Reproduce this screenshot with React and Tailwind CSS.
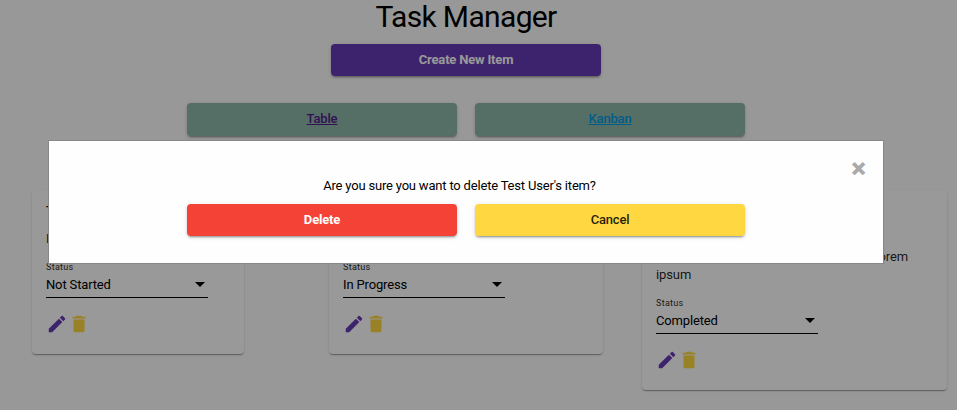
import React from "react";

const raised =
  "shadow-[0_3px_1px_-2px_rgba(0,0,0,.2),0_2px_2px_0_rgba(0,0,0,.14),0_1px_5px_0_rgba(0,0,0,.12)]";

function Button({ className, children }) {
  return (
    <button className={`flex w-[270px] items-center justify-center rounded text-[13px] tracking-[-0.18px] ${raised} ${className}`}>
      {children}
    </button>
  );
}

function Card({ className, title, status, children }) {
  return (
    <section
      className={`shrink-0 rounded bg-white px-[14px] pt-3 shadow-[0_2px_1px_-1px_rgba(0,0,0,.2),0_1px_1px_0_rgba(0,0,0,.14),0_1px_3px_0_rgba(0,0,0,.12)] ${className}`}
    >
      <h2 className="h-[18px] text-[13px] font-medium leading-[18px]">{title}</h2>
      <div className="mt-[10px] text-[13px] leading-[18px] tracking-[-0.1px] text-black/87">{children}</div>
      <div className="mt-[14px] w-[162px] border-b border-black">
        <div className="h-[10px] text-[9px] leading-[10px] tracking-[0.3px] text-black/87">Status</div>
        <div className="flex h-[25px] items-center justify-between pr-[3px] text-[13px] tracking-[-0.15px]">
          <span>{status}</span>
          <span className="border-x-[5px] border-t-[5px] border-x-transparent border-t-black" />
        </div>
      </div>
      <div className="mt-[15px] flex">
        <svg className="size-[22px] text-[#673ab7]" viewBox="0 0 24 24" fill="currentColor">
          <path d="M3 17.25V21h3.75L17.81 9.94l-3.75-3.75L3 17.25zM20.71 7.04a1 1 0 0 0 0-1.41l-2.34-2.34a1 1 0 0 0-1.41 0l-1.83 1.83 3.75 3.75 1.83-1.83z" />
        </svg>
        <svg className="-ml-[0.5px] size-[22px] text-[#ffd740]" viewBox="0 0 24 24" fill="currentColor">
          <path d="M6 19c0 1.1.9 2 2 2h8c1.1 0 2-.9 2-2V7H6v12zM19 4h-3.5l-1-1h-5l-1 1H5v2h14V4z" />
        </svg>
      </div>
    </section>
  );
}

export default function App() {
  return (
    <div className="relative h-[410px] w-[957px] overflow-hidden bg-[#fefefe] font-['Roboto',sans-serif] text-black">
      <main>
        <header className="flex w-[932px] flex-col items-center">
          <h1 className="h-[44px] text-[30px] leading-[34px] tracking-[-0.65px]">Task Manager</h1>
          <Button className="h-8 bg-[#673ab7] font-bold text-white">Create New Item</Button>
          <nav className="mt-[27px] flex gap-[18px]">
            <Button className="h-[33px] bg-[#8eb7aa] pb-0.5 font-medium text-[#551a8b] underline">Table</Button>
            <Button className="h-[33px] bg-[#8eb7aa] pb-0.5 font-medium text-[#039be5] underline">Kanban</Button>
          </nav>
        </header>
        <div className="mt-[54px] flex items-start pl-8">
          <Card className="h-[164px] w-[212px]" title="Test User" status="Not Started">
            Lorem ipsum
          </Card>
          <Card className="ml-[85px] h-[164px] w-[274px]" title="Test User" status="In Progress">
            Lorem ipsum
          </Card>
          <Card className="ml-[39px] h-[200px] w-[305px]" title="Test User" status="Completed">
            <div>Lorem ipsum Lorem ipsum</div>
            <div className="w-[252px] text-right">Lorem ipsum Lorem ipsum Lorem</div>
            <div>ipsum</div>
          </Card>
        </div>
      </main>

      <div className="absolute inset-0 bg-black/40 pl-12 pt-[140px]">
        <div className="flex h-[124px] w-[836px] flex-col border border-[#888] bg-[#fefefe]">
          <div className="flex h-[35px] justify-end pr-[17px] pt-[14px]">
            <span className="text-[28px] font-black leading-[28px] text-[#aaa]">×</span>
          </div>
          <p className="w-[821px] text-center text-[13px] leading-[20px] tracking-[-0.19px]">
            Are you sure you want to delete Test User's item?
          </p>
          <div className="mt-2 flex gap-[18px] pl-[138px]">
            <Button className="h-8 bg-[#f44336] font-bold text-white">Delete</Button>
            <Button className="h-8 bg-[#ffd740] font-medium text-black/87">Cancel</Button>
          </div>
        </div>
      </div>
    </div>
  );
}
